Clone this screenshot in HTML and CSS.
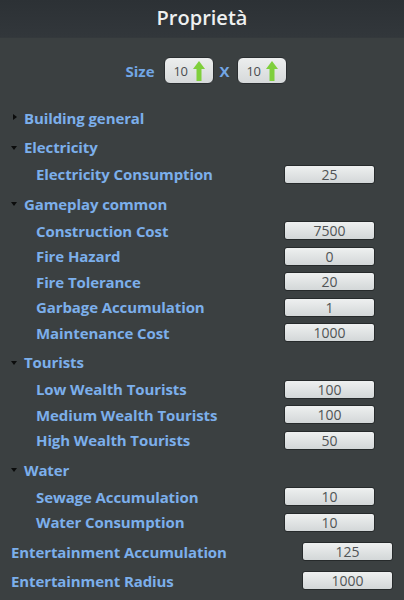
FILE: index.html
```html
<!DOCTYPE html>
<html lang="it">
<head>
<meta charset="utf-8">
<title>Proprietà</title>
<link rel="stylesheet" href="styles.css">
</head>
<body>
<div class="panel">
  <header class="title-bar">Proprietà</header>

  <div class="size-row">
    <span class="size-label">Size</span>
    <span class="size-box">10<svg class="arrow" viewBox="0 0 12 20" width="12" height="20"><path d="M6 0 L12 8 L8.5 8 L8.5 20 L3.5 20 L3.5 8 L0 8 Z" fill="#7fcf3c"/></svg></span>
    <span class="size-x">X</span>
    <span class="size-box">10<svg class="arrow" viewBox="0 0 12 20" width="12" height="20"><path d="M6 0 L12 8 L8.5 8 L8.5 20 L3.5 20 L3.5 8 L0 8 Z" fill="#7fcf3c"/></svg></span>
  </div>

  <div class="tree">
    <div class="row group first"><span class="tri tri-right"></span><span class="label">Building general</span></div>

    <div class="row group"><span class="tri tri-down"></span><span class="label">Electricity</span></div>
    <div class="row child"><span class="label">Electricity Consumption</span><span class="value">25</span></div>

    <div class="row group"><span class="tri tri-down"></span><span class="label">Gameplay common</span></div>
    <div class="row child"><span class="label">Construction Cost</span><span class="value">7500</span></div>
    <div class="row child"><span class="label">Fire Hazard</span><span class="value">0</span></div>
    <div class="row child"><span class="label">Fire Tolerance</span><span class="value">20</span></div>
    <div class="row child"><span class="label">Garbage Accumulation</span><span class="value">1</span></div>
    <div class="row child"><span class="label">Maintenance Cost</span><span class="value">1000</span></div>

    <div class="row group"><span class="tri tri-down"></span><span class="label">Tourists</span></div>
    <div class="row child"><span class="label">Low Wealth Tourists</span><span class="value">100</span></div>
    <div class="row child"><span class="label">Medium Wealth Tourists</span><span class="value">100</span></div>
    <div class="row child"><span class="label">High Wealth Tourists</span><span class="value">50</span></div>

    <div class="row group"><span class="tri tri-down"></span><span class="label">Water</span></div>
    <div class="row child"><span class="label">Sewage Accumulation</span><span class="value">10</span></div>
    <div class="row child"><span class="label">Water Consumption</span><span class="value">10</span></div>

    <div class="row leaf"><span class="label">Entertainment Accumulation</span><span class="value">125</span></div>
    <div class="row leaf last"><span class="label">Entertainment Radius</span><span class="value">1000</span></div>
  </div>
</div>
</body>
</html>
```

FILE: styles.css
```css
* { box-sizing: border-box; }

html, body {
  margin: 0;
  padding: 0;
  background: #3b4041;
  width: 404px;
  height: 600px;
  overflow: hidden;
}

.panel {
  font-family: "Open Sans", "DejaVu Sans", sans-serif;
  background: #3b4041;
  height: 600px;
}

.title-bar {
  height: 38px;
  background: linear-gradient(#2c3135, #32373b);
  color: #eef0f0;
  font-size: 20px;
  font-weight: 600;
  text-align: center;
  line-height: 36px;
  border-bottom: 1px solid #34393c;
}

.size-row {
  display: flex;
  align-items: center;
  justify-content: center;
  margin-top: 19px;
  height: 27px;
  padding-left: 8px;
}

.size-label, .size-x {
  color: #72a6e4;
  font-weight: 700;
  font-size: 15px;
}

.size-label { margin-right: 9px; }
.size-x { margin: 0 7px 0 6px; }

.size-box {
  display: flex;
  align-items: center;
  gap: 6px;
  width: 50px;
  height: 27px;
  padding-left: 9px;
  background: linear-gradient(#eceeee, #d6d9da);
  border: 1px solid #2a2e30;
  border-radius: 6px;
  color: #4a4d50;
  font-size: 13px;
  letter-spacing: -0.5px;
}

.arrow { display: block; }

.tree {
  margin-top: 21px;
}

.row {
  display: flex;
  align-items: center;
  height: 25.5px;
}

.label {
  color: #7cafeb;
  font-weight: 700;
  font-size: 15px;
  letter-spacing: -0.1px;
  white-space: nowrap;
}

.group {
  padding-left: 11px;
  margin-top: 4px;
  margin-bottom: 1.5px;
}

.group.first { margin-top: 0; }

.tri {
  width: 7px;
  height: 7px;
  margin-right: 6px;
  flex: none;
  position: relative;
}

.tri-right::before {
  content: "";
  position: absolute;
  left: 2px;
  top: 0;
  border-top: 3.5px solid transparent;
  border-bottom: 3.5px solid transparent;
  border-left: 4px solid #0b0c0c;
}

.tri-down::before {
  content: "";
  position: absolute;
  left: 0;
  top: 2px;
  border-left: 3.5px solid transparent;
  border-right: 3.5px solid transparent;
  border-top: 4px solid #0b0c0c;
}

.child {
  padding-left: 36px;
  padding-right: 29px;
}

.leaf {
  padding-left: 11px;
  padding-right: 11px;
  margin-top: 4px;
}

.leaf.last { margin-top: 3.5px; }

.value {
  margin-left: auto;
  width: 91px;
  height: 19px;
  flex: none;
  background: linear-gradient(#eef0f0, #d3d7d8);
  border: 1px solid #262a2b;
  border-radius: 3px;
  color: #505456;
  font-size: 14px;
  line-height: 17px;
  text-align: center;
}
```
